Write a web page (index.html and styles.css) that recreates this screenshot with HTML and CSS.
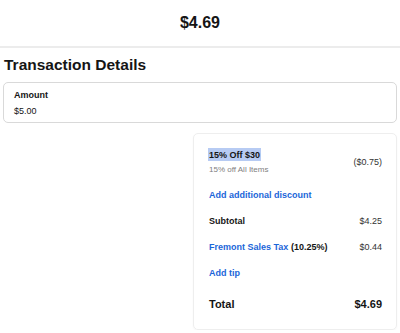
FILE: index.html
```html
<!DOCTYPE html>
<html lang="en">
<head>
    <meta charset="UTF-8">
    <title>Transaction</title>
    <link rel="stylesheet" href="styles.css">
</head>
<body>
    <header class="top">
        <h1 class="total-top">$4.69</h1>
    </header>

    <section class="details">
        <h2 class="details-title">Transaction Details</h2>

        <div class="amount-card">
            <div class="amount-label">Amount</div>
            <div class="amount-value">$5.00</div>
        </div>

        <div class="summary-wrap">
            <div class="summary">
                <div class="row discount">
                    <div>
                        <div class="discount-name"><span class="selected">15% Off $30</span></div>
                        <div class="discount-sub">15% off All Items</div>
                    </div>
                    <div class="value">($0.75)</div>
                </div>
                <a class="link row" href="#">Add additional discount</a>
                <div class="row">
                    <div class="strong">Subtotal</div>
                    <div class="value">$4.25</div>
                </div>
                <div class="row">
                    <div><a class="link" href="#">Fremont Sales Tax</a> <span class="strong">(10.25%)</span></div>
                    <div class="value">$0.44</div>
                </div>
                <a class="link row" href="#">Add tip</a>
                <div class="row grand">
                    <div>Total</div>
                    <div>$4.69</div>
                </div>
            </div>
        </div>
    </section>
</body>
</html>
```

FILE: styles.css
```css
body {
    font-family: "Liberation Sans", Arial, sans-serif;
    margin: 0;
    padding: 0;
    background-color: white;
    color: #151515;
}
.top {
    border-bottom: 2px solid #ececec;
    height: 46px;
    display: flex;
    align-items: center;
    justify-content: center;
}
.total-top {
    margin: 0;
    font-size: 16px;
    font-weight: bold;
}
.details {
    padding: 0 3px;
}
.details-title {
    margin: 8px 0 8px 1px;
    font-size: 15.5px;
    line-height: 18px;
    font-weight: bold;
}
.amount-card {
    border: 1px solid #d9d9d9;
    border-radius: 5px;
    padding: 7px 10px 6px 10px;
    font-size: 9px;
    line-height: 10px;
}
.amount-label {
    font-weight: bold;
    margin-bottom: 6px;
}
.summary-wrap {
    display: flex;
    justify-content: flex-end;
    margin-top: 10px;
}
.summary {
    box-sizing: border-box;
    width: 204px;
    border: 1px solid #eeeeee;
    border-radius: 5px;
    box-shadow: 0 1px 2px rgba(0, 0, 0, 0.04);
    padding: 16px 14px 18px 15px;
    font-size: 9px;
    line-height: 11px;
    display: flex;
    flex-direction: column;
}
.row {
    display: flex;
    justify-content: space-between;
    align-items: center;
    margin-top: 15px;
}
.summary > .discount {
    margin-top: 0;
}
.discount-name {
    font-weight: bold;
}
.selected {
    background-color: #b7cbf3;
    padding: 2px 1px 1px 1px;
    margin-left: -1px;
}
.discount-sub {
    color: #808080;
    font-size: 8px;
    line-height: 10px;
    margin-top: 4px;
}
.value {
    color: #333;
}
.link {
    color: #1b66d9;
    font-weight: bold;
    text-decoration: none;
}
.strong {
    font-weight: bold;
}
.summary > .grand {
    margin-top: 19px;
    font-size: 11px;
    line-height: 13px;
    font-weight: bold;
}
```
